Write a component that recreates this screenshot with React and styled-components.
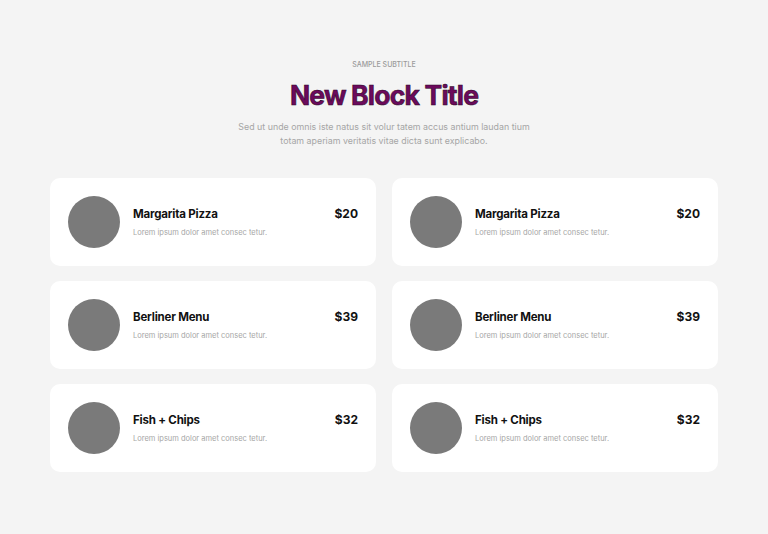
import React from 'react';
import styled, { createGlobalStyle } from 'styled-components';

const GlobalStyle = createGlobalStyle`
  html, body {
    margin: 0;
    padding: 0;
    background: #f4f4f4;
    font-family: Inter, "Open Sans", sans-serif;
  }
`;

const Page = styled.div`
  width: 768px;
  min-height: 534px;
  box-sizing: border-box;
  padding: 60px 50px 0 50px;
  background: #f4f4f4;
`;

const Header = styled.div`
  display: flex;
  flex-direction: column;
  align-items: center;
  text-align: center;
`;

const Subtitle = styled.div`
  font-size: 7px;
  line-height: 9px;
  text-transform: uppercase;
  color: #9a9a9a;
  font-weight: 500;
`;

const Title = styled.h1`
  margin: 10px 0 0 0;
  font-size: 26.5px;
  line-height: 32px;
  font-weight: 700;
  letter-spacing: -0.8px;
  color: #6c0a5c;
  -webkit-text-stroke: 0.6px #2a0925;
`;

const Lead = styled.p`
  margin: 9px 0 0 0;
  width: 296px;
  font-size: 8.85px;
  line-height: 14px;
  color: #a6a6a6;
`;

const Grid = styled.div`
  margin-top: 30px;
  display: grid;
  grid-template-columns: 1fr 1fr;
  column-gap: 16px;
  row-gap: 15px;
`;

const Card = styled.div`
  height: 88px;
  box-sizing: border-box;
  background: #fff;
  border-radius: 10px;
  padding: 0 18px;
  display: flex;
  align-items: center;
  gap: 13px;
`;

const Thumb = styled.div`
  width: 52px;
  height: 52px;
  flex: none;
  border-radius: 50%;
  background: #7a7a7a;
`;

const Info = styled.div`
  flex: 1;
  display: flex;
  flex-direction: column;
  gap: 7px;
  margin-top: -1px;
`;

const TopLine = styled.div`
  display: flex;
  justify-content: space-between;
  align-items: baseline;
`;

const Name = styled.div`
  font-size: 11.5px;
  font-weight: 700;
  color: #111;
  letter-spacing: -0.2px;
`;

const Price = styled.div`
  font-size: 12px;
  font-weight: 700;
  color: #111;
`;

const Desc = styled.div`
  font-size: 7.5px;
  color: #a6a6a6;
`;

const items = [
  { name: 'Margarita Pizza', price: '$20' },
  { name: 'Margarita Pizza', price: '$20' },
  { name: 'Berliner Menu', price: '$39' },
  { name: 'Berliner Menu', price: '$39' },
  { name: 'Fish + Chips', price: '$32' },
  { name: 'Fish + Chips', price: '$32' },
];

export default function App() {
  return (
    <>
      <GlobalStyle />
      <Page>
        <Header>
          <Subtitle>Sample Subtitle</Subtitle>
          <Title>New Block Title</Title>
          <Lead>
            Sed ut unde omnis iste natus sit volur tatem accus antium laudan tium totam aperiam veritatis vitae dicta sunt explicabo.
          </Lead>
        </Header>
        <Grid>
          {items.map((item, i) => (
            <Card key={i}>
              <Thumb />
              <Info>
                <TopLine>
                  <Name>{item.name}</Name>
                  <Price>{item.price}</Price>
                </TopLine>
                <Desc>Lorem ipsum dolor amet consec tetur.</Desc>
              </Info>
            </Card>
          ))}
        </Grid>
      </Page>
    </>
  );
}
